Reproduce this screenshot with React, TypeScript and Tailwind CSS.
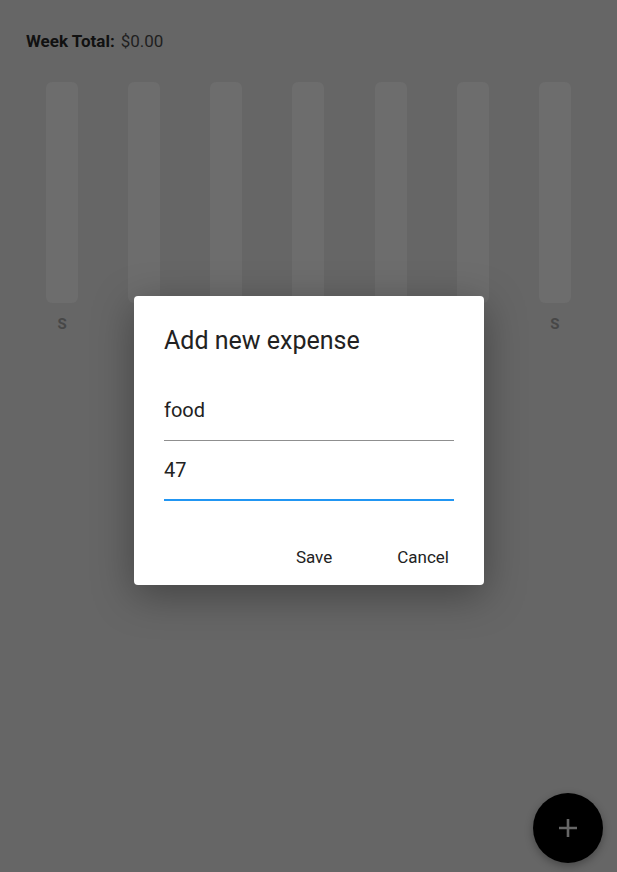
import { useState } from 'react'

const days = ['S', 'M', 'T', 'W', 'T', 'F', 'S']

export default function App() {
  const [title, setTitle] = useState('food')
  const [amount, setAmount] = useState('47')

  return (
    <div className="relative h-[872px] w-full overflow-hidden bg-[#666666] font-['Roboto','Liberation_Sans',sans-serif]">
      {/* Header */}
      <div className="px-[26px] pt-[30px] text-[17px] leading-[22px]">
        <span className="font-bold text-[#111111]">Week Total:</span>
        <span className="ml-[6px] text-[#1f1f1f]">$0.00</span>
      </div>

      {/* Weekly bars */}
      <div className="mt-[30px] flex px-[21px]">
        {days.map((d, i) => (
          <div key={i} className="flex flex-1 flex-col items-center">
            <div className="h-[221px] w-[32px] rounded-[6px] bg-[#6d6d6d]" />
            <span className="mt-[10px] text-[15px] font-bold text-[#474747]">{d}</span>
          </div>
        ))}
      </div>

      {/* Dialog */}
      <div className="absolute left-[134px] top-[296px] w-[350px] rounded-[4px] bg-white shadow-[0_10px_40px_rgba(0,0,0,0.35)]">
        <div className="px-[30px] pt-[30px]">
          <h2 className="text-[25px] leading-[30px] text-[#222222]">Add new expense</h2>
          <div className="mt-[24px] flex h-[61px] items-center border-b border-[#8f8f8f]">
            <input
              value={title}
              onChange={e => setTitle(e.target.value)}
              className="w-full bg-transparent text-[20px] text-[#222222] outline-none"
            />
          </div>
          <div className="flex h-[60px] items-center border-b-2 border-[#2196f3]">
            <input
              value={amount}
              onChange={e => setAmount(e.target.value)}
              className="w-full bg-transparent text-[20px] text-[#222222] outline-none"
            />
          </div>
        </div>
        <div className="mt-[39px] flex justify-end gap-[49px] pb-[9px] pr-[27px]">
          <button className="h-[36px] px-[8px] text-[17px] text-[#222222]">Save</button>
          <button className="h-[36px] px-[8px] text-[17px] text-[#222222]">Cancel</button>
        </div>
      </div>

      {/* FAB */}
      <button className="absolute bottom-[9px] right-[14px] flex h-[70px] w-[70px] items-center justify-center rounded-full bg-black shadow-[0_3px_8px_rgba(0,0,0,0.3)]">
        <svg width="20" height="20" viewBox="0 0 20 20">
          <path d="M10 1v18M1 10h18" stroke="#666666" strokeWidth="2.6" />
        </svg>
      </button>
    </div>
  )
}
